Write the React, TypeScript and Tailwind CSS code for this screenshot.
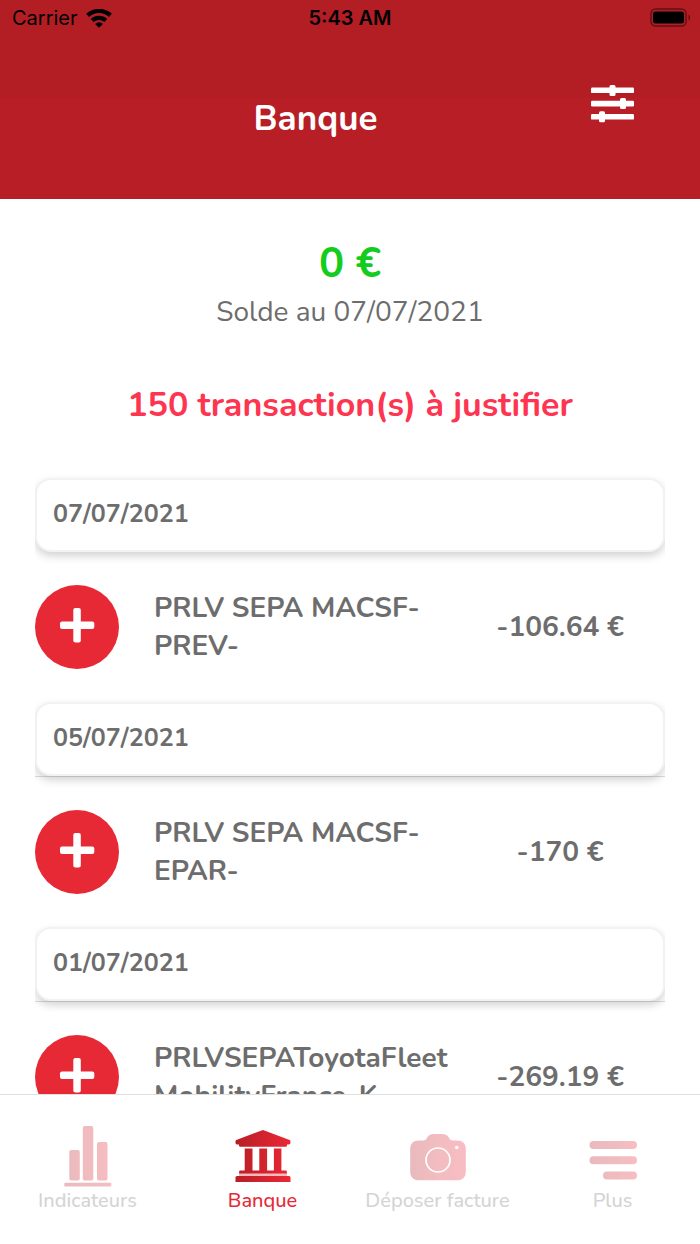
import type { ReactNode } from "react";

interface Transaction {
  id: number;
  date: string;
  label: string;
  amount: string;
}

interface Tab {
  label: string;
  icon: ReactNode;
  active?: boolean;
}

const transactions: Transaction[] = [
  { id: 1, date: "07/07/2021", label: "PRLV SEPA MACSF-PREV-", amount: "-106.64 €" },
  { id: 2, date: "05/07/2021", label: "PRLV SEPA MACSF-EPAR-", amount: "-170 €" },
  { id: 3, date: "01/07/2021", label: "PRLVSEPAToyotaFleet MobilityFrance-K", amount: "-269.19 €" }
];

const tabs: Tab[] = [
  { label: "Indicateurs", icon: <ChartIcon /> },
  { label: "Banque", icon: <BankIcon />, active: true },
  { label: "Déposer facture", icon: <CameraIcon /> },
  { label: "Plus", icon: <MoreIcon /> }
];

function WifiIcon() {
  return (
    <svg width="26" height="19" viewBox="0 0 26 19" aria-hidden="true">
      <g fill="none" stroke="#000" strokeWidth="4.2">
        <path d="M1.6 6.4a16.6 16.6 0 0 1 22.8 0" />
        <path d="M6.2 11.6a9.8 9.8 0 0 1 13.6 0" />
      </g>
      <path d="M13 18.8l-3.9-3.9a5.5 5.5 0 0 1 7.8 0z" />
    </svg>
  );
}

function BatteryIcon() {
  return (
    <svg width="40" height="20" viewBox="0 0 40 20" aria-hidden="true">
      <rect x="1" y="1" width="35" height="17" rx="4.5" fill="none" stroke="#000" strokeOpacity=".45" strokeWidth="1.5" />
      <rect x="3" y="3.5" width="31" height="12" rx="2.5" />
      <path d="M38.5 6.5c2 .8 2 5.2 0 6z" fillOpacity=".5" />
    </svg>
  );
}

function FilterIcon() {
  return (
    <svg width="43" height="38" viewBox="0 0 43 38" fill="#fff" aria-hidden="true">
      <rect y="2.5" width="43" height="5.6" rx="1.2" />
      <rect x="18.5" y="0" width="6" height="11" rx="1.5" />
      <rect y="15.8" width="43" height="5.6" rx="1.2" />
      <rect x="29" y="13" width="6" height="11" rx="1.5" />
      <rect y="29" width="43" height="5.6" rx="1.2" />
      <rect x="8" y="26.3" width="6" height="11" rx="1.5" />
    </svg>
  );
}

function ChartIcon() {
  return (
    <svg width="56" height="62" viewBox="0 0 56 62" aria-hidden="true">
      <defs>
        <linearGradient id="chart-fill" gradientUnits="userSpaceOnUse" x1="4" y1="0" x2="52" y2="0">
          <stop stopColor="#eababd" />
          <stop offset="1" stopColor="#f6bdc1" />
        </linearGradient>
      </defs>
      <g fill="url(#chart-fill)">
        <rect x="9.3" y="25" width="10.5" height="30.5" rx="2" />
        <rect x="22.8" y="1" width="10.5" height="54.5" rx="2" />
        <rect x="37" y="17" width="10.5" height="38.5" rx="2" />
        <rect x="4.3" y="57.8" width="47" height="3.6" rx="1" />
      </g>
    </svg>
  );
}

function BankIcon() {
  return (
    <svg width="56" height="62" viewBox="0 0 56 62" aria-hidden="true">
      <defs>
        <linearGradient id="bank-fill" gradientUnits="userSpaceOnUse" x1="0" y1="0" x2="56" y2="0">
          <stop stopColor="#b71e26" />
          <stop offset="1" stopColor="#ec2836" />
        </linearGradient>
      </defs>
      <g fill="url(#bank-fill)">
        <path d="M28 5 54.6 15q.8.4.8 1.2V18q0 1.4-1.4 1.400H52v1q0 1.400-1.400 1.400H5.400Q4 21.800 4 20.400v-1H2Q.5 19.400.5 18v-1.800q0-.8.8-1.200z" />
        <path d="M9.700 23.500h7.800v22h6.800v-22h7.800v22h6.800v-22h7.500v22H50.500q1.400 0 1.400 1.300V48.800H4.100V46.800q0-1.300 1.400-1.300H9.700z" />
        <path d="M2 51h52q1.500 0 1.500 1.500V57H.5v-4.500Q.5 51 2 51z" />
      </g>
      <rect x="4" y="48.800" width="48" height="2.200" fill="#f3b9bd" />
    </svg>
  );
}

function CameraIcon() {
  return (
    <svg width="56" height="62" viewBox="0 0 56 62" aria-hidden="true">
      <defs>
        <linearGradient id="camera-fill" gradientUnits="userSpaceOnUse" x1="0" y1="0" x2="56" y2="0">
          <stop stopColor="#e8babd" />
          <stop offset=".5" stopColor="#f2bcc0" />
          <stop offset="1" stopColor="#f7bdc2" />
        </linearGradient>
      </defs>
      <path
        fill="url(#camera-fill)"
        d="M9 15.500h4c2.500 0 3-.8 4-2.700 1.500-2.600 3.500-3.800 6.500-3.800h9c3 0 5 1.200 6.500 3.800 1 1.900 1.500 2.700 4 2.700h4c5.500 0 8.800 3.300 8.800 8.800V46.500c0 5.500-3.300 8.800-8.800 8.800H9c-5.500 0-8.800-3.300-8.800-8.800V24.300c0-5.500 3.300-8.800 8.800-8.800z"
      />
      <circle cx="28" cy="35" r="12" fill="none" stroke="#fff" strokeWidth="1.700" />
      <circle cx="46.800" cy="22.500" r="1.700" fill="#fff" />
    </svg>
  );
}

function MoreIcon() {
  return (
    <svg width="56" height="62" viewBox="0 0 56 62" aria-hidden="true">
      <defs>
        <linearGradient id="more-fill" gradientUnits="userSpaceOnUse" x1="4" y1="0" x2="52" y2="0">
          <stop stopColor="#e8babd" />
          <stop offset="1" stopColor="#f7bdc2" />
        </linearGradient>
      </defs>
      <g fill="url(#more-fill)">
        <rect x="4.500" y="16" width="47.500" height="8" rx="4" />
        <rect x="4.500" y="31.300" width="47.500" height="8" rx="4" />
        <rect x="18" y="46.500" width="34" height="8" rx="4" />
      </g>
    </svg>
  );
}

function StatusBar() {
  return (
    <div className="grid h-9 grid-cols-3 items-center px-2.5 font-['Inter','Liberation_Sans',sans-serif] text-xl text-black">
      <div className="flex items-center gap-2 pl-0.5">
        <span>Carrier</span>
        <WifiIcon />
      </div>
      <span className="text-center font-semibold">5:43 AM</span>
      <div className="flex justify-end">
        <BatteryIcon />
      </div>
    </div>
  );
}

function TransactionItem({ transaction }: { transaction: Transaction }) {
  return (
    <li className="group">
      <div className="overflow-x-clip border-b border-[#dcdcdc] group-first:border-b-0">
        <h2 className="flex h-[74px] items-center rounded-2xl border-2 border-[#f2f2f2] bg-white px-4 text-[25px] font-bold shadow-[0_4px_8px_rgba(0,0,0,0.18)]">
          {transaction.date}
        </h2>
      </div>
      <div className="flex h-[150px] items-center">
        <button
          type="button"
          aria-label={`Justifier ${transaction.label}`}
          className="flex size-[84px] shrink-0 items-center justify-center rounded-full bg-[#e72936]"
        >
          <svg width="36" height="38" viewBox="0 0 36 38" fill="#fff" aria-hidden="true">
            <rect x="14.3" y="0" width="7.5" height="34.5" rx="2" />
            <rect x="1" y="13.5" width="34.3" height="7.5" rx="2" />
          </svg>
        </button>
        <p className="min-w-0 flex-1 pl-[35px] text-[28px] leading-[38px] font-bold">{transaction.label}</p>
        <p className="w-1/3 text-center text-[28px] leading-[38px] font-bold">{transaction.amount}</p>
      </div>
    </li>
  );
}

export default function App() {
  return (
    <div className="flex h-screen flex-col bg-white font-['Nunito','Open_Sans',sans-serif] text-[#6d6d6d]">
      <header className="h-[199px] shrink-0 bg-linear-to-b from-[#b31e25] from-49% to-[#b71e26] to-49% text-white">
        <StatusBar />
        <div className="flex items-start pt-[49px] pr-[66px] pl-10">
          <h1 className="flex-1 pt-2.5 text-center text-[35px] leading-[48px] font-bold">Banque</h1>
          <button type="button" aria-label="Filtrer">
            <FilterIcon />
          </button>
        </div>
      </header>

      <main className="min-h-0 flex-1 overflow-hidden px-[35px] pt-[37px]">
        <section className="text-center">
          <p className="text-[42px] leading-[56px] font-bold text-[#14cc1e]">0 €</p>
          <p className="text-[28px] leading-10">Solde au 07/07/2021</p>
        </section>
        <p className="pt-[49px] text-center text-[34px] leading-[48px] font-bold text-[#fd3550]">
          150 transaction(s) à justifier
        </p>
        <ul className="pt-[49px]">
          {transactions.map((transaction) => (
            <TransactionItem key={transaction.id} transaction={transaction} />
          ))}
        </ul>
      </main>

      <nav className="grid h-[150px] shrink-0 grid-cols-4 border-t border-[#e0e0e0] bg-white pt-[30px]">
        {tabs.map((tab) => (
          <a
            key={tab.label}
            href="#"
            aria-current={tab.active ? "page" : undefined}
            className={`flex flex-col items-center text-xl font-medium ${tab.active ? "text-[#e72936]" : "text-[#d4d4d4]"}`}
          >
            {tab.icon}
            <span className="whitespace-nowrap">{tab.label}</span>
          </a>
        ))}
      </nav>
    </div>
  );
}
